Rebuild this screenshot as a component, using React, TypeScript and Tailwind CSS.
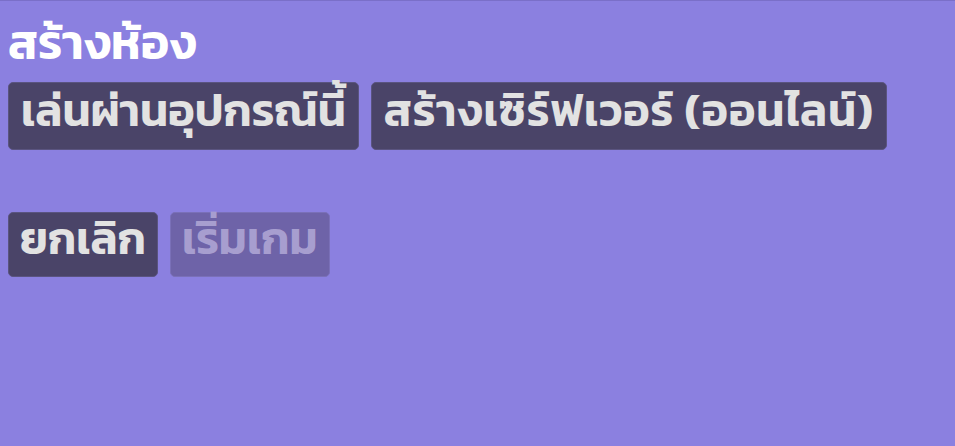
const buttonBase =
  "rounded-[5px] border border-[#5a5480] flex items-center text-[45px] font-semibold leading-none"

export default function App() {
  return (
    <div className="w-[955px] h-[446px] bg-[#8b80e0] border-t border-[#7a6fc8] px-2 pt-[14px] font-['Kanit',sans-serif] overflow-hidden">
      <h1 className="text-[48px] font-semibold text-white leading-none h-[60px] pb-[6px] flex items-center">
        สร้างห้อง
      </h1>
      <div className="flex gap-3 mt-[7px]">
        <button className={`${buttonBase} px-[12px] h-[68px] pb-[11px] bg-[#4a4468] text-[#e2e2e2]`}>
          เล่นผ่านอุปกรณ์นี้
        </button>
        <button
          className={`${buttonBase} px-[12px] h-[68px] pb-[11px] tracking-[0.8px] bg-[#4a4468] text-[#e2e2e2]`}
        >
          สร้างเซิร์ฟเวอร์ (ออนไลน์)
        </button>
      </div>
      <div className="flex gap-3 mt-[62px]">
        <button className={`${buttonBase} px-[11px] h-[65px] pb-[12px] bg-[#4a4468] text-[#e2e2e2]`}>
          ยกเลิก
        </button>
        <button
          disabled
          className={`${buttonBase} px-[11px] h-[65px] pb-[12px] bg-[#6e63a8] border-[#7a70b8] text-[#a79ecf]`}
        >
          เริ่มเกม
        </button>
      </div>
    </div>
  )
}
